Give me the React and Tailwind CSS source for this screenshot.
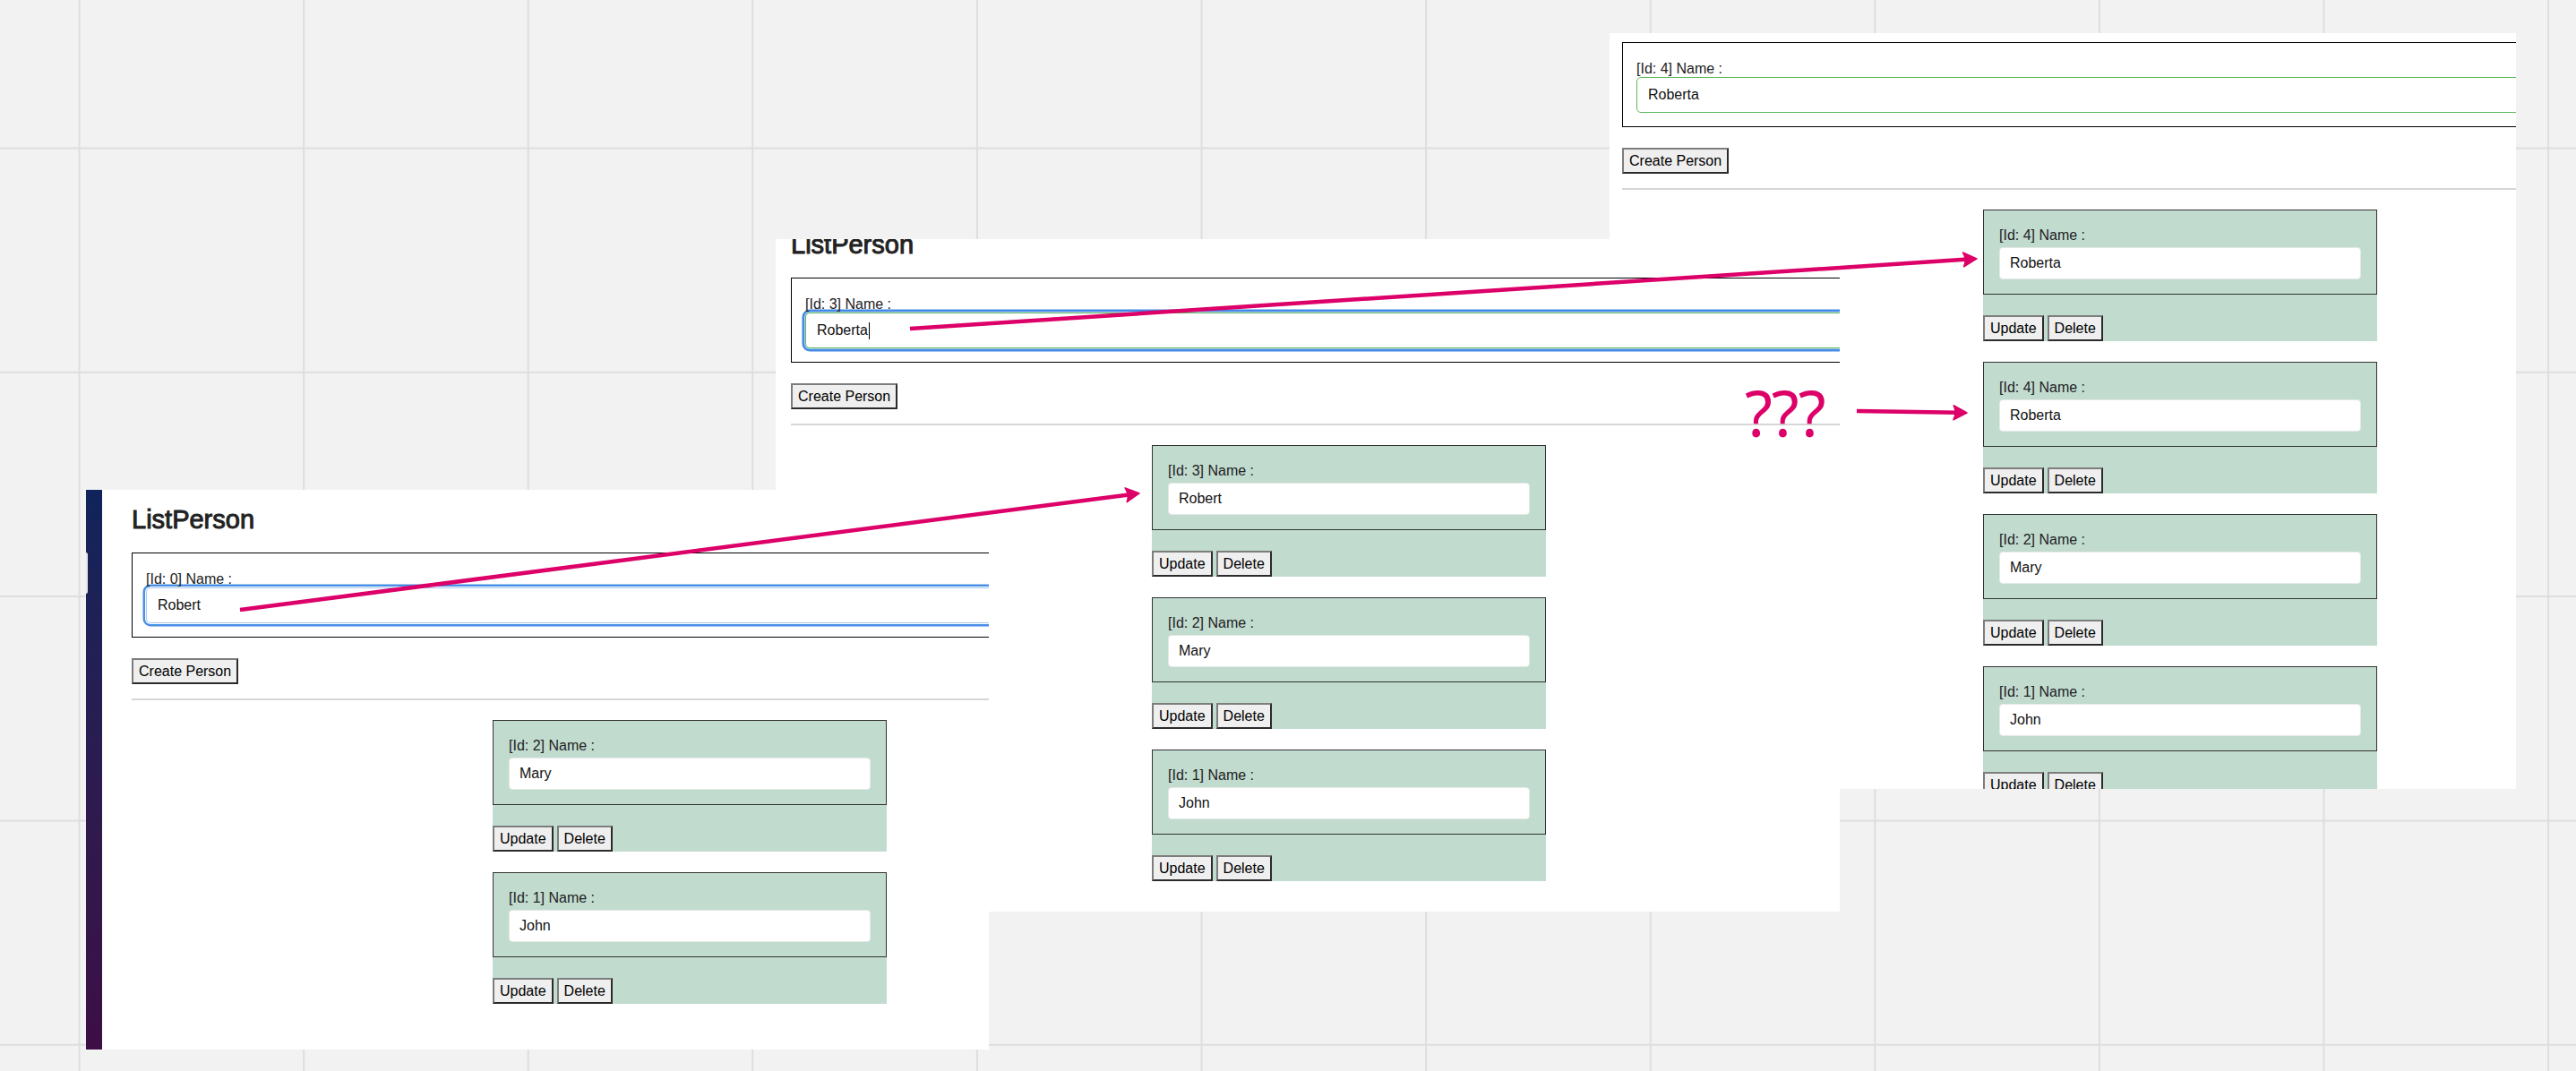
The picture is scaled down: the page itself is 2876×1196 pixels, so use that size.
import React from "react";

const PINK = "#dc0068";

const inputStyles = {
  focus: "border-[#a9c8f2] shadow-[0_0_0_1px_#ffffff,0_0_0_3.5px_#4a8fe6]",
  focusValid: "border-[#5cb85c] shadow-[0_0_0_1px_#b6d2f5,0_0_0_3.5px_#4389e6]",
  valid: "border-[#5cb85c]",
};

const Btn = ({ children }) => (
  <button className="h-[29px] px-[6px] bg-[#efefef] border-2 border-t-[#7d7d7d] border-l-[#7d7d7d] border-r-[#2b2b2b] border-b-[#2b2b2b] text-[16px] leading-none text-black">
    {children}
  </button>
);

const PersonCard = ({ id, name }) => (
  <div className="bg-[#c1dbcf]">
    <div className="border border-[#333] px-[17px] pt-[19px] pb-[16px]">
      <div className="text-[16px] leading-[18px] text-[#222]">[Id: {id}] Name :</div>
      <div className="mt-[4px] h-[36px] rounded-[4px] bg-white border border-[#e4e9e6] px-[11px] flex items-center text-[16px] text-[#111]">
        {name}
      </div>
    </div>
    <div className="flex gap-[4px] pt-[23px]">
      <Btn>Update</Btn>
      <Btn>Delete</Btn>
    </div>
  </div>
);

// one captured state of the ListPerson page
const ListPerson = ({ form, persons, className }) => (
  <div className={"w-[1246px] shrink-0 pt-[17px] " + className}>
    <h1 className="h-[32px] text-[29px] leading-[32px] font-normal text-[#222] [-webkit-text-stroke:1px_#222] mb-[21px]">
      ListPerson
    </h1>
    <div className="border border-black px-[15px] pt-[20px] pb-[15px]">
      <div className="text-[16px] leading-[18px] text-[#222]">[Id: {form.id}] Name :</div>
      <div
        className={
          "h-[40px] rounded-[5px] bg-white border px-[12px] flex items-center text-[16px] text-[#111] " +
          inputStyles[form.state]
        }
      >
        {form.name}
        {form.caret && <span className="ml-px inline-block w-px h-[19px] bg-black" />}
      </div>
    </div>
    <div className="mt-[23px]">
      <Btn>Create Person</Btn>
    </div>
    <div className="mt-[16px] h-[2px] bg-[#d6d6d6]" />
    <div className="mt-[22px] mx-auto w-[440px] flex flex-col gap-[23px]">
      {persons.map((p, i) => (
        <PersonCard key={i} id={p.id} name={p.name} />
      ))}
    </div>
  </div>
);

const Arrow = ({ x1, y1, x2, y2 }) => {
  const a = Math.atan2(y2 - y1, x2 - x1);
  const deg = (a * 180) / Math.PI;
  const ex = x2 - Math.cos(a) * 9;
  const ey = y2 - Math.sin(a) * 9;
  return (
    <g>
      <line x1={x1} y1={y1} x2={ex} y2={ey} stroke={PINK} strokeWidth="4.5" />
      <path
        d="M1 0 L-14 -8 Q-10 0 -14 8 Z"
        fill={PINK}
        stroke={PINK}
        strokeWidth="1.5"
        strokeLinejoin="round"
        transform={`translate(${x2} ${y2}) rotate(${deg})`}
      />
    </g>
  );
};

const Grid = () => {
  const xs = Array.from({ length: 12 }, (_, i) => 88.5 + i * 250.6);
  const ys = Array.from({ length: 5 }, (_, i) => 165.5 + i * 250.3);
  return (
    <svg className="absolute inset-0" width="2876" height="1196">
      {xs.map((x) => (
        <line key={"x" + x} x1={x} y1="0" x2={x} y2="1196" stroke="#dedede" strokeWidth="2" />
      ))}
      {ys.map((y) => (
        <line key={"y" + y} x1="0" y1={y} x2="2876" y2={y} stroke="#dedede" strokeWidth="2" />
      ))}
    </svg>
  );
};

export default function App() {
  return (
    <div
      className="relative w-[2876px] h-[1196px] overflow-hidden bg-[#f2f2f2]"
      style={{ fontFamily: '"Liberation Sans", Arial, sans-serif' }}
    >
      <Grid />

      {/* third capture (back) */}
      <div className="absolute left-[1797px] top-[37px] w-[1012px] h-[844px] bg-white overflow-hidden flex pl-[14px]">
        <ListPerson
          className="-mt-[60px]"
          form={{ id: 4, name: "Roberta", state: "valid" }}
          persons={[
            { id: 4, name: "Roberta" },
            { id: 4, name: "Roberta" },
            { id: 2, name: "Mary" },
            { id: 1, name: "John" },
          ]}
        />
      </div>

      {/* second capture */}
      <div className="absolute left-[866px] top-[267px] w-[1188px] h-[751px] bg-white overflow-hidden flex pl-[17px]">
        <ListPerson
          className="-mt-[27px]"
          form={{ id: 3, name: "Roberta", state: "focusValid", caret: true }}
          persons={[
            { id: 3, name: "Robert" },
            { id: 2, name: "Mary" },
            { id: 1, name: "John" },
          ]}
        />
      </div>

      {/* first capture (front) */}
      <div className="absolute left-[96px] top-[547px] w-[1008px] h-[625px] bg-white overflow-hidden flex">
        <div className="relative w-[18px] shrink-0 bg-linear-to-b from-[#0f245b] to-[#3c0e45]">
          <div className="absolute left-0 top-[70px] w-[2px] h-[46px] rounded-r-[2px] bg-[#e4e4e4]" />
        </div>
        <div className="flex-1 overflow-hidden flex pl-[33px]">
          <ListPerson
            className=""
            form={{ id: 0, name: "Robert", state: "focus" }}
            persons={[
              { id: 2, name: "Mary" },
              { id: 1, name: "John" },
            ]}
          />
        </div>
      </div>

      {/* annotations */}
      <svg className="absolute inset-0 pointer-events-none" width="2876" height="1196">
        <Arrow x1={268} y1={681} x2={1271} y2={551} />
        <Arrow x1={1016} y1={367} x2={2206} y2={289} />
        <Arrow x1={2073} y1={459} x2={2195} y2={461} />
      </svg>
      <div
        className="absolute left-[1948px] top-[425px] text-[71px] leading-none tracking-[-1px] text-[#dc0068]"
        style={{ fontFamily: '"Noto Sans", sans-serif' }}
      >
        ???
      </div>
    </div>
  );
}
